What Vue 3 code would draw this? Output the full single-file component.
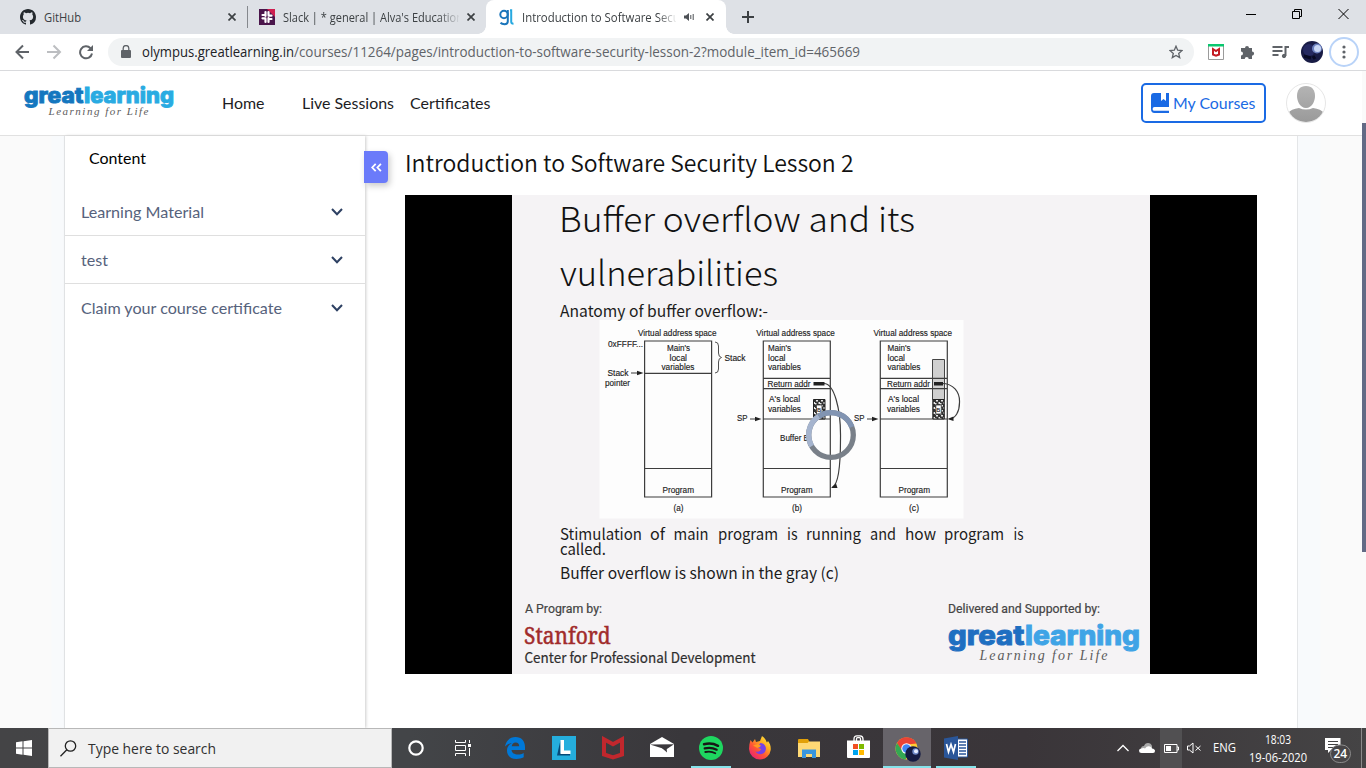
<script setup>
import { h } from 'vue'

// Single-line label whose glyphs are fitted to a fixed width.
const Fit = (p) =>
  h('svg', { width: p.w, height: 20, class: 'fit' }, [
    h('text', { x: 0, y: 15, textLength: p.w, lengthAdjust: 'spacingAndGlyphs', fill: 'currentColor' }, p.t),
  ])
Fit.props = ['t', 'w']

const modules = [
  { name: 'Learning Material', w: 123 },
  { name: 'test', w: 27 },
  { name: 'Claim your course certificate', w: 201 },
]

// Slide text: [content, x, baseline, width]
const body = [
  ['Anatomy of buffer overflow:-', 560, 317, 208],
  ['Stimulation', 560, 540.3, 82], ['of', 650, 540.3, 15], ['main', 673.5, 540.3, 35],
  ['program', 718, 540.3, 60], ['is', 787, 540.3, 10.5], ['running', 806, 540.3, 55],
  ['and', 870, 540.3, 26], ['how', 905, 540.3, 31], ['program', 944, 540.3, 60], ['is', 1013.5, 540.3, 10],
  ['called.', 560, 555.2, 46],
  ['Buffer overflow is shown in the gray (c)', 560, 578.8, 279],
]
const labels = [
  ['Virtual address space', 638, 336, 78.5], ['0xFFFF...', 608, 347, 35],
  ["Main's", 667, 351, 23], ['local', 669.5, 360.5, 17.5], ['variables', 661.5, 370, 33],
  ['Stack', 724.5, 360.5, 21], ['Stack', 607.5, 376, 21], ['pointer', 605, 386, 25],
  ['Program', 662.5, 492.5, 31.5], ['(a)', 673.5, 511, 10],
  ['Virtual address space', 756.3, 336, 78.5], ["Main's", 768, 351, 23], ['local', 768, 360.5, 17.5],
  ['variables', 768, 370, 33], ['Return addr', 767.5, 387, 43], ["A's local", 769, 402, 31],
  ['variables', 768, 412, 33], ['SP', 737, 421, 10.5], ['Buffer B', 780, 440.5, 29],
  ['Program', 781, 492.5, 31.5], ['(b)', 792, 511, 10],
  ['Virtual address space', 873.5, 336, 78.5], ["Main's", 887.5, 351, 23], ['local', 887.5, 360.5, 17.5],
  ['variables', 887.5, 370, 33], ['Return addr', 887, 387, 43], ["A's local", 888, 402, 31],
  ['variables', 887, 412, 33], ['SP', 854, 421, 10.5], ['Program', 898.5, 492.5, 31.5], ['(c)', 909, 511, 10],
]
</script>

<template>
  <div class="screen">
    <header class="tabs">
      <div class="tab t1">
        <svg width="16" height="16" viewBox="0 0 16 16"><path fill="#24292e" d="M8 0C3.58 0 0 3.58 0 8c0 3.54 2.29 6.53 5.47 7.59.4.07.55-.17.55-.38 0-.19-.01-.82-.01-1.49-2.01.37-2.53-.49-2.69-.94-.09-.23-.48-.94-.82-1.13-.28-.15-.68-.52-.01-.53.63-.01 1.08.58 1.23.82.72 1.21 1.87.87 2.33.66.07-.52.28-.87.51-1.07-1.78-.2-3.64-.89-3.64-3.95 0-.87.31-1.59.82-2.15-.08-.2-.36-1.02.08-2.12 0 0 .67-.21 2.2.82a7.6 7.6 0 0 1 4 0c1.53-1.04 2.2-.82 2.2-.82.44 1.1.16 1.92.08 2.12.51.56.82 1.27.82 2.15 0 3.07-1.87 3.75-3.65 3.95.29.25.54.73.54 1.48 0 1.07-.01 1.93-.01 2.2 0 .21.15.46.55.38A8 8 0 0 0 16 8c0-4.42-3.58-8-8-8z"/></svg>
        <div class="tabname"><Fit t="GitHub" :w="37" /></div>
        <svg class="x" width="8" height="8" viewBox="0 0 8 8"><path d="M.5.5l7 7M7.5.5l-7 7"/></svg>
      </div>
      <div class="tab t2">
        <svg width="16" height="16" viewBox="0 0 16 16"><path fill="#4a154b" d="M0 0h16v16H0z"/><path fill="#cf1f50" d="M8 0h8v8z"/><g stroke="#fff" stroke-width="2.200" stroke-linecap="round" fill="none"><path d="M6.500 3v4M3.500 9.300h3M9.500 9v4M9.500 6.700h3M3.500 6h3M9.500 10h3M6.500 10v3M9.500 3v3"/></g></svg>
        <div class="tabname fade"><Fit t="Slack | * general | Alva's Education" :w="180" /></div>
        <svg class="x" width="8" height="8" viewBox="0 0 8 8"><path d="M.5.5l7 7M7.5.5l-7 7"/></svg>
      </div>
      <div class="tab t3">
        <svg width="16" height="17" viewBox="0 0 16 17" fill="none" stroke-width="2"><circle cx="5" cy="5.500" r="3.700" stroke="#1a75bb"/><path stroke="#1a75bb" d="M8.800 1v11.200q0 3-3.300 3-2.600 0-4-1.400"/><path stroke="#27a9e0" d="M11 1.300h1.200v11.500q0 2 2.300 2"/></svg>
        <div class="tabname fade"><Fit t="Introduction to Software Security" :w="175" /></div>
        <svg class="snd" width="10" height="8" viewBox="0 0 10 8"><path fill="#4d5156" d="M0 2.500h2L5 0v8L2 5.500H0z"/><path stroke="#4d5156" fill="none" d="M6.800 2v4M9.200 1v6"/></svg>
        <svg class="x" width="8" height="8" viewBox="0 0 8 8"><path d="M.5.5l7 7M7.5.5l-7 7"/></svg>
      </div>
      <svg class="plus" width="12" height="12" viewBox="0 0 12 12"><path d="M6 0v12M0 6h12" stroke="#3c4043" stroke-width="2"/></svg>
      <svg class="win" width="104" height="12" viewBox="0 0 104 12" fill="none" stroke="#000" stroke-width="1"><path d="M0 6.500h10M46.500 3.500h7v7h-7zM48.500 3.500v-2h7v7h-2M92.500 1l10 10M102.500 1l-10 10"/></svg>
    </header>

    <div class="toolbar">
      <svg class="navicons" width="84" height="16" viewBox="0 0 84 16" fill="none" stroke-width="2"><path stroke="#5f6368" d="M15 8H3M9 1.500L2.500 8 9 14.500"/><path stroke="#bcbec1" d="M33 8h12M39.500 1.500L46 8l-6.500 6.500"/><path stroke="#5f6368" d="M76.500 4.200A6 6 0 1 0 78 9.500"/><path fill="#5f6368" d="M79 1v6h-6z"/></svg>
      <div class="omni">
        <svg width="10" height="13" viewBox="0 0 10 13"><path fill="#5f6368" d="M1 5h8q1 0 1 1v6q0 1-1 1H1q-1 0-1-1V6q0-1 1-1z"/><path fill="none" stroke="#5f6368" stroke-width="1.300" d="M2.200 5V3.300a2.800 2.800 0 0 1 5.600 0V5"/></svg>
        <Fit class="host" t="olympus.greatlearning.in" :w="152" />
        <Fit class="path" t="/courses/11264/pages/introduction-to-software-security-lesson-2?module_item_id=465669" :w="566" />
        <svg class="star" width="14" height="14" viewBox="0 0 14 14"><path fill="none" stroke="#5f6368" stroke-width="1.300" d="M7 1.200l1.700 4 4.300.4-3.300 2.800 1 4.200L7 10.400l-3.700 2.200 1-4.200L1 5.600l4.300-.4z"/></svg>
      </div>
      <svg class="mc" width="16" height="16" viewBox="0 0 16 16"><path fill="#fff" stroke="#9b9b9b" d="M.5.5h15v15H.5z"/><path fill="#09c76e" d="M0 0h16v2.500H0z"/><path fill="none" stroke="#c41c23" stroke-width="2" d="M5 5v5.500l3 1.200 3-1.200V5L8 7z"/></svg>
      <svg class="puz" width="15" height="15" viewBox="0 0 15 15"><path fill="#5f6368" d="M1.500 3H5a2 2 0 0 1 4 0h3v3.500a2 2 0 0 1 0 4.200V14H8.700a2 2 0 0 0-4 0H1v-3.500a2 2 0 0 0 0-4V3z"/></svg>
      <svg class="mus" width="17" height="14" viewBox="0 0 17 14" fill="none" stroke="#5f6368" stroke-width="2"><path d="M.5 2h10M.5 6h10M.5 10h6M13.500 11V2H17"/><circle cx="12" cy="11" r="1.700" fill="#5f6368" stroke-width="1"/></svg>
      <svg class="ava" width="22" height="22" viewBox="0 0 22 22"><circle cx="11" cy="11" r="11" fill="#181b45"/><circle cx="8" cy="9" r="6" fill="#252961"/><circle cx="16" cy="7.500" r="5" fill="#6b7fbd"/><circle cx="16.500" cy="7.500" r="3.500" fill="#cad7f5"/><path d="M3 15l7 2M12 15l2 3" stroke="#080a24" stroke-width="3"/></svg>
      <div class="menu"><svg width="4" height="14" viewBox="0 0 4 14" fill="#5f6368"><circle cx="2" cy="2" r="1.600"/><circle cx="2" cy="7" r="1.600"/><circle cx="2" cy="12" r="1.600"/></svg></div>
    </div>

    <div class="site">
      <svg class="logo" width="152" height="34" viewBox="23 84 152 34">
        <g class="brand" font-size="21"><text x="24" y="102" textLength="59.500" lengthAdjust="spacingAndGlyphs" fill="#1477bf" stroke="#1477bf">great</text><text x="84" y="102" textLength="90" lengthAdjust="spacingAndGlyphs" fill="#29abe2" stroke="#29abe2">learning</text></g>
        <text class="tag" x="48.500" y="114" font-size="11" textLength="100">Learning for Life</text>
      </svg>
      <nav><Fit t="Home" :w="42.5" /><Fit class="live" t="Live Sessions" :w="92" /><Fit t="Certificates" :w="80.5" /></nav>
      <div class="mycourses">
        <svg width="18" height="20" viewBox="0 0 18 20"><path fill="#1a6ae4" d="M3 0h7v8l2.500-2L15 8V0h3v14H3.500a1.700 1.700 0 0 0 0 3.800H18V20H3.500Q0 20 0 16V3q0-3 3-3z"/></svg>
        <Fit t="My Courses" :w="82.5" />
      </div>
      <svg class="person" width="40" height="40" viewBox="0 0 40 40"><defs><linearGradient id="pg" gradientUnits="userSpaceOnUse" x1="0" y1="0" x2="0" y2="40"><stop stop-color="#b6b6b6"/><stop offset="1" stop-color="#999"/></linearGradient><clipPath id="pc"><circle cx="20" cy="20" r="19"/></clipPath></defs><circle cx="20" cy="20" r="19.500" fill="#fff" stroke="#e6e6e6"/><g clip-path="url(#pc)" fill="url(#pg)"><path d="M20 3c6 0 9 4 9 10 0 5-3 12-9 12s-9-7-9-12c0-6 3-10 9-10z"/><path d="M2 40V30q3-4 11-5 7 3 14 0 8 1 11 5v10z"/></g></svg>
    </div>

    <div class="page">
      <main class="content">
        <aside>
          <h2><Fit t="Content" :w="57" /></h2>
          <div v-for="m in modules" :key="m.name" class="module">
            <Fit :t="m.name" :w="m.w" />
            <svg class="chev" width="12" height="8" viewBox="0 0 12 8"><path d="M1 1l5 5.300L11 1" fill="none" stroke="#2e4163" stroke-width="2"/></svg>
          </div>
        </aside>
        <div class="toggle"><svg width="11" height="9" viewBox="0 0 11 9"><path d="M4.700.8L1.200 4.500l3.500 3.700M9.900.8L6.400 4.500l3.500 3.700" fill="none" stroke="#fff" stroke-width="1.800"/></svg></div>
        <section>
          <h1><Fit t="Introduction to Software Security Lesson 2" :w="448.5" /></h1>
          <svg class="video" width="852" height="479" viewBox="405 195 852 479">
            <defs>
              <pattern id="speckle" width="5" height="5" patternUnits="userSpaceOnUse"><path fill="#333" d="M0 0h5v5H0z"/><path fill="#e8e8e8" d="M1 0h2v1.500H1zM3.500 2H5v2H3.500zM0 3h1.500v1.500H0z"/></pattern>
            </defs>
            <path d="M405 195h852v479H405z"/>
            <path fill="#f5f3f5" d="M512 195h638v479H512z"/>
            <g class="head"><text x="559" y="231.700" textLength="356" lengthAdjust="spacingAndGlyphs">Buffer overflow and its</text><text x="560" y="285.500" textLength="218" lengthAdjust="spacingAndGlyphs">vulnerabilities</text></g>
            <path fill="#fdfdfd" d="M599.500 320H963.500v198.500H599.500z"/>
            <g class="body"><text v-for="(b, i) in body" :key="i" :x="b[1]" :y="b[2]" :textLength="b[3]" lengthAdjust="spacingAndGlyphs">{{ b[0] }}</text></g>
            <path fill="#d0d0d0" stroke="#444" d="M932.500 359.500h12v40h-12z"/>
            <g fill="none" stroke="#3d3d3d" stroke-width="1.200">
              <path d="M644.600 341h67v156h-67zM644.600 373.300h67M644.600 468.500h67"/>
              <path d="M763.300 341h67v156h-67zM763.300 378.300h67M763.300 388.700h67M763.300 419h67M763.300 468.500h67"/>
              <path d="M880.300 341h67v156h-67zM880.300 378.300h67M880.300 388.700h67M880.300 419h67M880.300 468.500h67"/>
              <path stroke-width=".9" d="M715 342q3.500 0 3.500 4v7q0 4 3 4.500-3 .5-3 4.500v7q0 4-3.500 4"/>
              <path d="M631 373h8M750 419h8M867 419h8M824 383.500c10 0 17 25 16.500 55 0 28-2 46-8 48.500M942 383.500c11 0 18 8 17.500 19 0 9-4 16-10 16.500"/>
            </g>
            <path fill="#222" d="M637 370.800l6.500 2.200-6.500 2.200zM755 416.800l6.500 2.200-6.500 2.200zM872 416.800l6.500 2.200-6.500 2.200zM831 488l5-4.500 1.500 4.500zM947.500 419l6-2.500v4.500zM813.500 382h11v3.600h-11zM934 382h9v3.600h-9z"/>
            <g fill="url(#speckle)" stroke="#222"><path d="M813.500 399.500h11.500v19.500h-11.500zM932.800 399.500h11.500v19.500h-11.500z"/></g>
            <path fill="#fff" stroke="#333" stroke-width=".8" d="M816.500 405h5.500v9h-5.500zM935.800 405h5.500v9h-5.500z"/>
            <g class="labels"><text v-for="(b, i) in labels" :key="i" :x="b[1]" :y="b[2]" :textLength="b[3]" lengthAdjust="spacingAndGlyphs">{{ b[0] }}</text><text x="817" y="412" font-size="6">B</text><text x="936.300" y="412" font-size="6">B</text></g>
            <g fill="none" stroke-width="5.300" transform="translate(831 435)"><circle r="22.300" stroke="#798089"/><path stroke="#a5b4ce" d="M-19.300 11.200A22.300 22.300 0 0 1-12.200-18.700"/><path stroke="#8194b2" d="M-12.200-18.700A22.300 22.300 0 0 1 20.800-8"/></g>
            <g class="credit">
              <text x="525" y="613" font-size="12.500" textLength="77" lengthAdjust="spacingAndGlyphs">A Program by:</text>
              <text x="948" y="613" font-size="12.500" textLength="152" lengthAdjust="spacingAndGlyphs">Delivered and Supported by:</text>
            </g>
            <text class="stanford" x="524" y="644" textLength="86.500" lengthAdjust="spacingAndGlyphs">Stanford</text>
            <text class="center" x="524.500" y="663" textLength="231" lengthAdjust="spacingAndGlyphs">Center for Professional Development</text>
            <g class="brand" font-size="27"><text x="948" y="645.300" textLength="76.500" lengthAdjust="spacingAndGlyphs" fill="#1f6fc1" stroke="#1f6fc1">great</text><text x="1025" y="645.300" textLength="115" lengthAdjust="spacingAndGlyphs" fill="#3fa4e6" stroke="#3fa4e6">learning</text></g>
            <text class="tag" x="979.500" y="659.500" font-size="14" textLength="128">Learning for Life</text>
          </svg>
        </section>
      </main>
    </div>
    <div class="scroll"></div>

    <footer>
      <div class="start"><svg width="16" height="16" viewBox="0 0 16 16" fill="#fff"><path d="M0 2.200l6.500-.9v6.200H0zM7.500 1.200L16 0v7.500H7.500zM0 8.500h6.500v6.200L0 13.800zM7.500 8.500H16V16l-8.500-1.200z"/></svg></div>
      <div class="search"><svg width="17" height="17" viewBox="0 0 17 17" fill="none" stroke="#222" stroke-width="1.300"><circle cx="10.500" cy="6" r="5.200"/><path d="M6.800 9.700L.5 16.200"/></svg><Fit t="Type here to search" :w="128" /></div>
      <div class="cell cort"><svg width="16" height="16"><circle cx="8" cy="8" r="6.700" fill="none" stroke="#fff" stroke-width="2.200"/></svg></div>
      <div class="cell tv"><svg width="17" height="16" viewBox="0 0 17 16" fill="none" stroke="#fff"><path d="M.5 0v2.500h10V0M.500 5.500h10v5H.500zM.500 16v-2.500h10V16M14.500 0v3M14.500 8v8"/><path fill="#fff" stroke="none" d="M13 4h3v3h-3z"/></svg></div>
      <div class="cell"><svg width="20" height="22" viewBox="0 0 20 22"><path fill="#0078d7" d="M0 9.500C1 3.500 5 0 10.500 0 16.500 0 20 4 20 10v3H6.500c.3 3 3 4.500 6.500 4.500 2.200 0 4-.5 5.700-1.500v4.300C16.500 21.500 14 22 11.500 22 5.500 22 2 18.500 2 13.500c0-3.500 2-6 5-7.500C4 6.500 1.500 8 0 9.500zM6.700 9.200h7.500C14.200 7 13 5.500 10.700 5.500 8.500 5.500 7 7 6.700 9.200z"/></svg></div>
      <div class="cell"><svg width="24" height="24" viewBox="0 0 24 24"><path fill="#25aedd" d="M0 0h24v24H0z"/><path fill="#064a78" d="M8.500 4L5 19.500h3.500zM5 19.500h13V17H8z"/><path fill="#fff" d="M8.500 4H12v10.500h6.500V18h-10z"/></svg></div>
      <div class="cell"><svg width="22" height="24" viewBox="0 0 22 24"><path fill="none" stroke="#c1272d" stroke-width="4" d="M2 3.300v15.200l9 3 9-3V3.300l-9 5z"/></svg></div>
      <div class="cell"><svg class="up" width="24" height="20" viewBox="0 0 24 20"><path fill="#fff" d="M0 7L12 0l12 7v13H0z"/><path fill="#3b393d" d="M0 7.500l24-.3-9 6-3-2z"/><path fill="#3b393d" d="M11 10l6 5.500-.5-5z"/></svg></div>
      <div class="cell on"><svg width="24" height="24" viewBox="0 0 24 24"><circle cx="12" cy="12" r="12" fill="#1ed760"/><g fill="none" stroke="#171717" stroke-linecap="round"><path stroke-width="2.500" d="M5 8.300q7.500-2 14 1.500"/><path stroke-width="2.200" d="M5.700 12.400q6.300-1.700 12 1.300"/><path stroke-width="1.800" d="M6.300 16q5.700-1.300 10 1.300"/></g></svg></div>
      <div class="cell"><svg width="24" height="24" viewBox="0 0 24 24"><defs><linearGradient id="ff" x1="1" y1="0" x2=".2" y2="1"><stop stop-color="#fff44f"/><stop offset=".35" stop-color="#ffb320"/><stop offset=".65" stop-color="#ff5634"/><stop offset="1" stop-color="#e81e78"/></linearGradient></defs><path fill="url(#ff)" d="M2.500 4l2 2.500L7 3l1 3 4-1 2-5c4 3 4 5 5 6.500L20 5c2 2.500 3 5 2.700 9A10.800 10.800 0 0 1 12 23.500 11 11 0 0 1 1 13c0-3 .5-6 1.500-9z"/><path fill="#7542e5" d="M12.500 7a5.600 5.600 0 1 1-5 8.500c3 1 5-.5 5.500-2.500l-4-1.500z"/><path fill="#ff9a22" d="M5 9.500l5-1.500q1.500 1 3 1.500-1 2-3.500 2.500z"/></svg></div>
      <div class="cell"><svg width="22" height="19" viewBox="0 0 22 19"><path fill="#e2a008" d="M0 1q0-1 1-1h9l1.500 3H22v5H0z"/><path fill="#ffd975" d="M0 4h9.500l1.500-1.500h11V18H0z"/><path fill="#3a96dd" d="M4 18v-7.500h14V19h-4v-4H8v4H4z"/></svg></div>
      <div class="cell"><svg class="up" width="23" height="23" viewBox="0 0 23 23"><path fill="none" stroke="#fff" stroke-width="1.300" d="M7 9V4Q7 .8 10 .8h3Q16 .8 16 4v5M9.500 8V4q0-1.300 1-1.300h2q1 0 1 1.300v4"/><path fill="#fff" d="M0 5.500h23V22q0 1-1 1H1q-1 0-1-1z"/><path fill="#f25022" d="M6 9h5v5H6z"/><path fill="#7fba00" d="M12 9h5v5h-5z"/><path fill="#00a4ef" d="M6 15h5v5H6z"/><path fill="#ffb900" d="M12 15h5v5h-5z"/></svg></div>
      <div class="cell on active"><svg class="chrome" width="26" height="25" viewBox="0 0 26 25"><circle cx="11.500" cy="11.500" r="11" fill="#fc3"/><path fill="#ea4335" d="M2 6A11 11 0 0 1 21.500 6.500L12 7.500 6.500 14z"/><path fill="#34a853" d="M2 6l6 9 5 2-2.500 5.500A11 11 0 0 1 2 6z"/><circle cx="11.500" cy="11.500" r="5.200" fill="#fff"/><circle cx="11.500" cy="11.500" r="4.200" fill="#4285f4"/><circle cx="18" cy="17" r="7.700" fill="#151b43"/><circle cx="20.500" cy="14.500" r="3.200" fill="#6e88c8"/><circle cx="21" cy="14.300" r="2" fill="#e3ebff"/></svg></div>
      <div class="cell on"><svg width="24" height="24" viewBox="0 0 24 24"><path fill="#fff" stroke="#2a5699" d="M13 3h10.500v18H13z"/><path stroke="#2a5699" stroke-width="1.300" d="M15 6h7M15 9h7M15 12h7M15 15h7M15 18h7"/><path fill="#2a5699" d="M0 2.500L14 0v24L0 21.500z"/><path fill="none" stroke="#fff" stroke-width="1.700" d="M2.500 8l2 8L7 8.500 9.500 16l2-8"/></svg></div>

      <div class="tray">
        <svg width="12" height="8" viewBox="0 0 12 8"><path d="M.5 7L6 1.500 11.500 7" fill="none" stroke="#fff" stroke-width="1.300"/></svg>
        <svg class="cloud" width="16" height="10" viewBox="0 0 16 10"><path fill="#aaa" d="M2 6Q2 3 5 3q1-3 4-3t4 3v4H2z"/><path fill="#fff" d="M2.500 10Q0 10 0 7.700 0 6 2 5.500q3-1 4 0 2-3 5-2 1.500.5 2 2Q16 6 16 8t-2 2z"/></svg>
        <div class="bat"><svg width="15" height="9" viewBox="0 0 15 9"><path fill="none" stroke="#fff" d="M.5.5h12.500v8H.500zM13 3h1.500v3H13"/><path fill="#fff" d="M2 2h5v5H2z"/></svg></div>
        <svg class="mute" width="14" height="12" viewBox="0 0 14 12" fill="none" stroke="#fff"><path d="M.5 4h2L6 1v10L2.500 8h-2zM8.500 4l5 4.500M13.500 4l-5 4.500"/></svg>
        <Fit class="eng" t="ENG" :w="23" />
        <div class="clock"><Fit t="18:03" :w="26" /><Fit t="19-06-2020" :w="58" /></div>
        <svg class="note" width="28" height="26" viewBox="0 0 28 26"><path fill="#fff" d="M0 0h15.500v12H6l-3 3v-3H0z"/><path stroke="#444" d="M3 3.500h10M3 6.500h10M3 9.500h6"/><rect x="5.500" y="7" width="20" height="17.500" rx="8.700" fill="#484648" stroke="#8b8b8b"/><text x="8.500" y="20" textLength="13.500" font-size="12" font-weight="600" fill="#fff">24</text></svg>
        <div class="desk"></div>
      </div>
    </footer>
  </div>
</template>

<style>
body { background: #fff; overflow: hidden; }
.fit { display: block; flex: none; overflow: visible; }
</style>

<style scoped>
.screen { width: 1366px; height: 768px; display: flex; flex-direction: column; position: relative; overflow: hidden; font: 12px "Open Sans", "Noto Sans", sans-serif; color: #3c4043; }
svg { flex: none; display: block; }
.tabs { height: 34px; background: #dee1e6; display: flex; align-items: center; flex: none; }
.tab { height: 34px; display: flex; align-items: center; box-sizing: border-box; }
.x { fill: none; stroke: #3c4043; stroke-width: 1.700; }
.t1 { width: 248px; padding-left: 20px; border-right: 1px solid #85888d; border-image: linear-gradient(transparent 7px, #85888d 7px, #85888d 27px, transparent 27px) 1; }
.tabname { margin-left: 8px; width: 176px; overflow: hidden; }
.t1 .tabname { width: 184px; }
.t2 { width: 238px; padding-left: 11px; }
.t2 .x { margin-left: 8px; }
.fade { -webkit-mask: linear-gradient(90deg, #000 88%, transparent 101%); mask: linear-gradient(90deg, #000 88%, transparent 101%); }
.t3 { width: 240px; padding-left: 13px; background: #fff; border-radius: 8px 8px 0 0; color: #3c4043; position: relative; }
.t3::before, .t3::after { content: ""; position: absolute; bottom: 0; width: 8px; height: 8px; }
.t3::before { left: -8px; background: radial-gradient(circle at 0 0, #dee1e6 7.500px, #fff 8px); }
.t3::after { right: -8px; background: radial-gradient(circle at 100% 0, #dee1e6 7.500px, #fff 8px); }
.t3 .tabname { width: 154px; margin-left: 7px; }
.snd { margin-left: 8px; }
.t3 .x { margin-left: 12px; }
.plus { margin-left: 16px; }
.win { margin-left: auto; margin-right: 16px; margin-bottom: 6px; }
.toolbar { height: 36px; border-bottom: 1px solid #d9dadd; background: #fff; flex: none; display: flex; align-items: center; }
.navicons { margin-left: 14px; }
.omni { margin-left: 10px; width: 1086px; height: 28px; border-radius: 14px; background: #f1f3f4; display: flex; align-items: center; box-sizing: border-box; padding-left: 13px; font-size: 14px; }
.omni svg:first-child { margin-bottom: 2px; }
.host { margin-left: 11px; color: #202124; }
.path { color: #5f6368; }
.star { margin-left: auto; margin-right: 11px; }
.mc { margin-left: 14px; }
.puz { margin-left: 16px; }
.mus { margin-left: 17px; }
.ava { margin-left: 12px; }
.menu { margin-left: 6px; width: 26px; height: 26px; border: 2px solid #b9d3f8; border-radius: 50%; display: flex; align-items: center; justify-content: center; }
.site { height: 64px; border-bottom: 1px solid #e1e1e1; background: #fff; flex: none; display: flex; align-items: center; font-family: Lato, sans-serif; font-size: 16px; color: #1d1d1f; }
.logo { margin-left: 23px; margin-bottom: 3px; overflow: visible; }
.brand { font-family: Inter, sans-serif; font-weight: 800; stroke-width: .9; }
.tag { font-family: "Liberation Serif", serif; font-style: italic; fill: #5c5c5c; }
nav { display: flex; margin-left: 47px; margin-top: 2px; }
.live { margin: 0 16px 0 37.500px; }
.mycourses { margin-left: auto; width: 121px; height: 36px; border: 2px solid #1a6ae4; border-radius: 5px; display: flex; align-items: center; color: #1a6ae4; }
.mycourses > svg:first-child { margin-left: 8px; }
.mycourses > svg:last-child { margin-left: 4px; margin-top: 2px; }
.person { margin: 0 40px 0 20px; }
.page { height: 592px; flex: none; padding: 0 68px 0 64px; box-sizing: border-box; background: linear-gradient(90deg, #fafafa 51px, #f8fafc 52px, #f8fafc 1320px, #fafafa 1321px); font-family: Lato, sans-serif; }
.content { width: 1232px; height: 592px; border-left: 1px solid #e4e6e8; border-right: 1px solid #e4e6e8; background: #fff; display: flex; }
aside { width: 300px; box-shadow: 1px 0 3px #ccc; flex: none; color: #56627c; font-size: 16px; }
h1, h2 { margin: 0; font-weight: 400; }
h2 { height: 52px; padding: 13px 0 0 24px; box-sizing: border-box; font-size: 16px; color: #000; }
.module { height: 45px; border-bottom: 1px solid #dfdfdf; display: flex; justify-content: space-between; align-items: center; padding: 2px 22px 0 16px; }
.module:last-child { border: 0; }
.chev { margin-bottom: 1px; }
.toggle { width: 24px; height: 32px; margin: 15px 0 0 -1px; background: #6b7bfa; border-radius: 0 4px 4px 0; box-shadow: 2px 3px 6px #ccc; display: flex; align-items: center; justify-content: center; position: relative; flex: none; }
section { margin-left: 17px; }
h1 { height: 59px; padding-top: 21px; box-sizing: border-box; font: 350 23.500px "Noto Sans CJK SC", "Open Sans", sans-serif; color: #111; }
.head { font-family: "Noto Sans CJK SC", Lato, sans-serif; font-weight: 300; font-size: 34px; fill: #111; }
.body { font-family: "Noto Sans CJK SC", Lato, sans-serif; font-weight: 400; font-size: 15.500px; fill: #1c1c1c; }
.labels { font-family: "Liberation Sans", sans-serif; font-size: 8.500px; fill: #222; stroke: #222; stroke-width: .15; }
.credit { font-family: Roboto, sans-serif; fill: #444; stroke: #444; stroke-width: .2; }
.stanford { font-family: "Noto Serif", "Liberation Serif", serif; font-size: 23.500px; fill: #a12b2b; stroke: #a12b2b; stroke-width: .5; }
.center { font-family: "Noto Sans CJK SC", sans-serif; font-size: 14.500px; fill: #2e2e2e; stroke: #2e2e2e; stroke-width: .2; }
.scroll { position: absolute; right: 0; top: 71px; width: 4px; height: 657px; background: linear-gradient(#fafafa 52px, #626a85 52px, #626a85 481px, #fafafa 481px); }
footer { height: 40px; flex: none; display: flex; background: linear-gradient(90deg, #444446, #434548 30%, #39373b 50%, #3a3539 75%, #454445); color: #fff; }
.start { width: 48px; display: flex; align-items: center; justify-content: center; }
.search { width: 344px; box-sizing: border-box; background: #f1f1f1; border: 1px solid #b8b8b8; display: flex; align-items: center; color: #303030; font-size: 15px; padding-left: 11px; gap: 11px; }
.search svg:last-child { margin-top: 1px; }
.cell { width: 49px; display: flex; align-items: center; justify-content: center; position: relative; }
.cort { width: 48px; }
.tv { width: 50.500px; box-sizing: border-box; padding-right: 3px; }
.up { margin-bottom: 3px; }
.on::after { content: ""; position: absolute; left: 4px; right: 5px; bottom: 0; height: 2px; background: #85e3ea; }
.active { background: #67646a; width: 48px; margin: 0 .5px; }
.active::after { left: 0; right: 0; }
.chrome { margin: 3px 0 0 2px; }
.tray { margin-left: auto; display: flex; align-items: center; width: 249px; }
.cloud { margin-left: 10px; }
.bat { width: 22px; height: 40px; background: #515052; margin-left: 5px; display: flex; align-items: center; justify-content: center; }
.mute { margin-left: 5px; }
.eng { margin-left: 12px; font-size: 13px; margin-top: -2px; }
.clock { width: 70px; margin-left: 7px; display: flex; flex-direction: column; align-items: center; margin-top: -3px; }
.clock .fit { height: 18px; }
.note { margin-left: 12px; margin-top: 6px; }
.desk { width: 1px; height: 40px; background: #8a8a8a; margin-left: 8px; }
</style>
